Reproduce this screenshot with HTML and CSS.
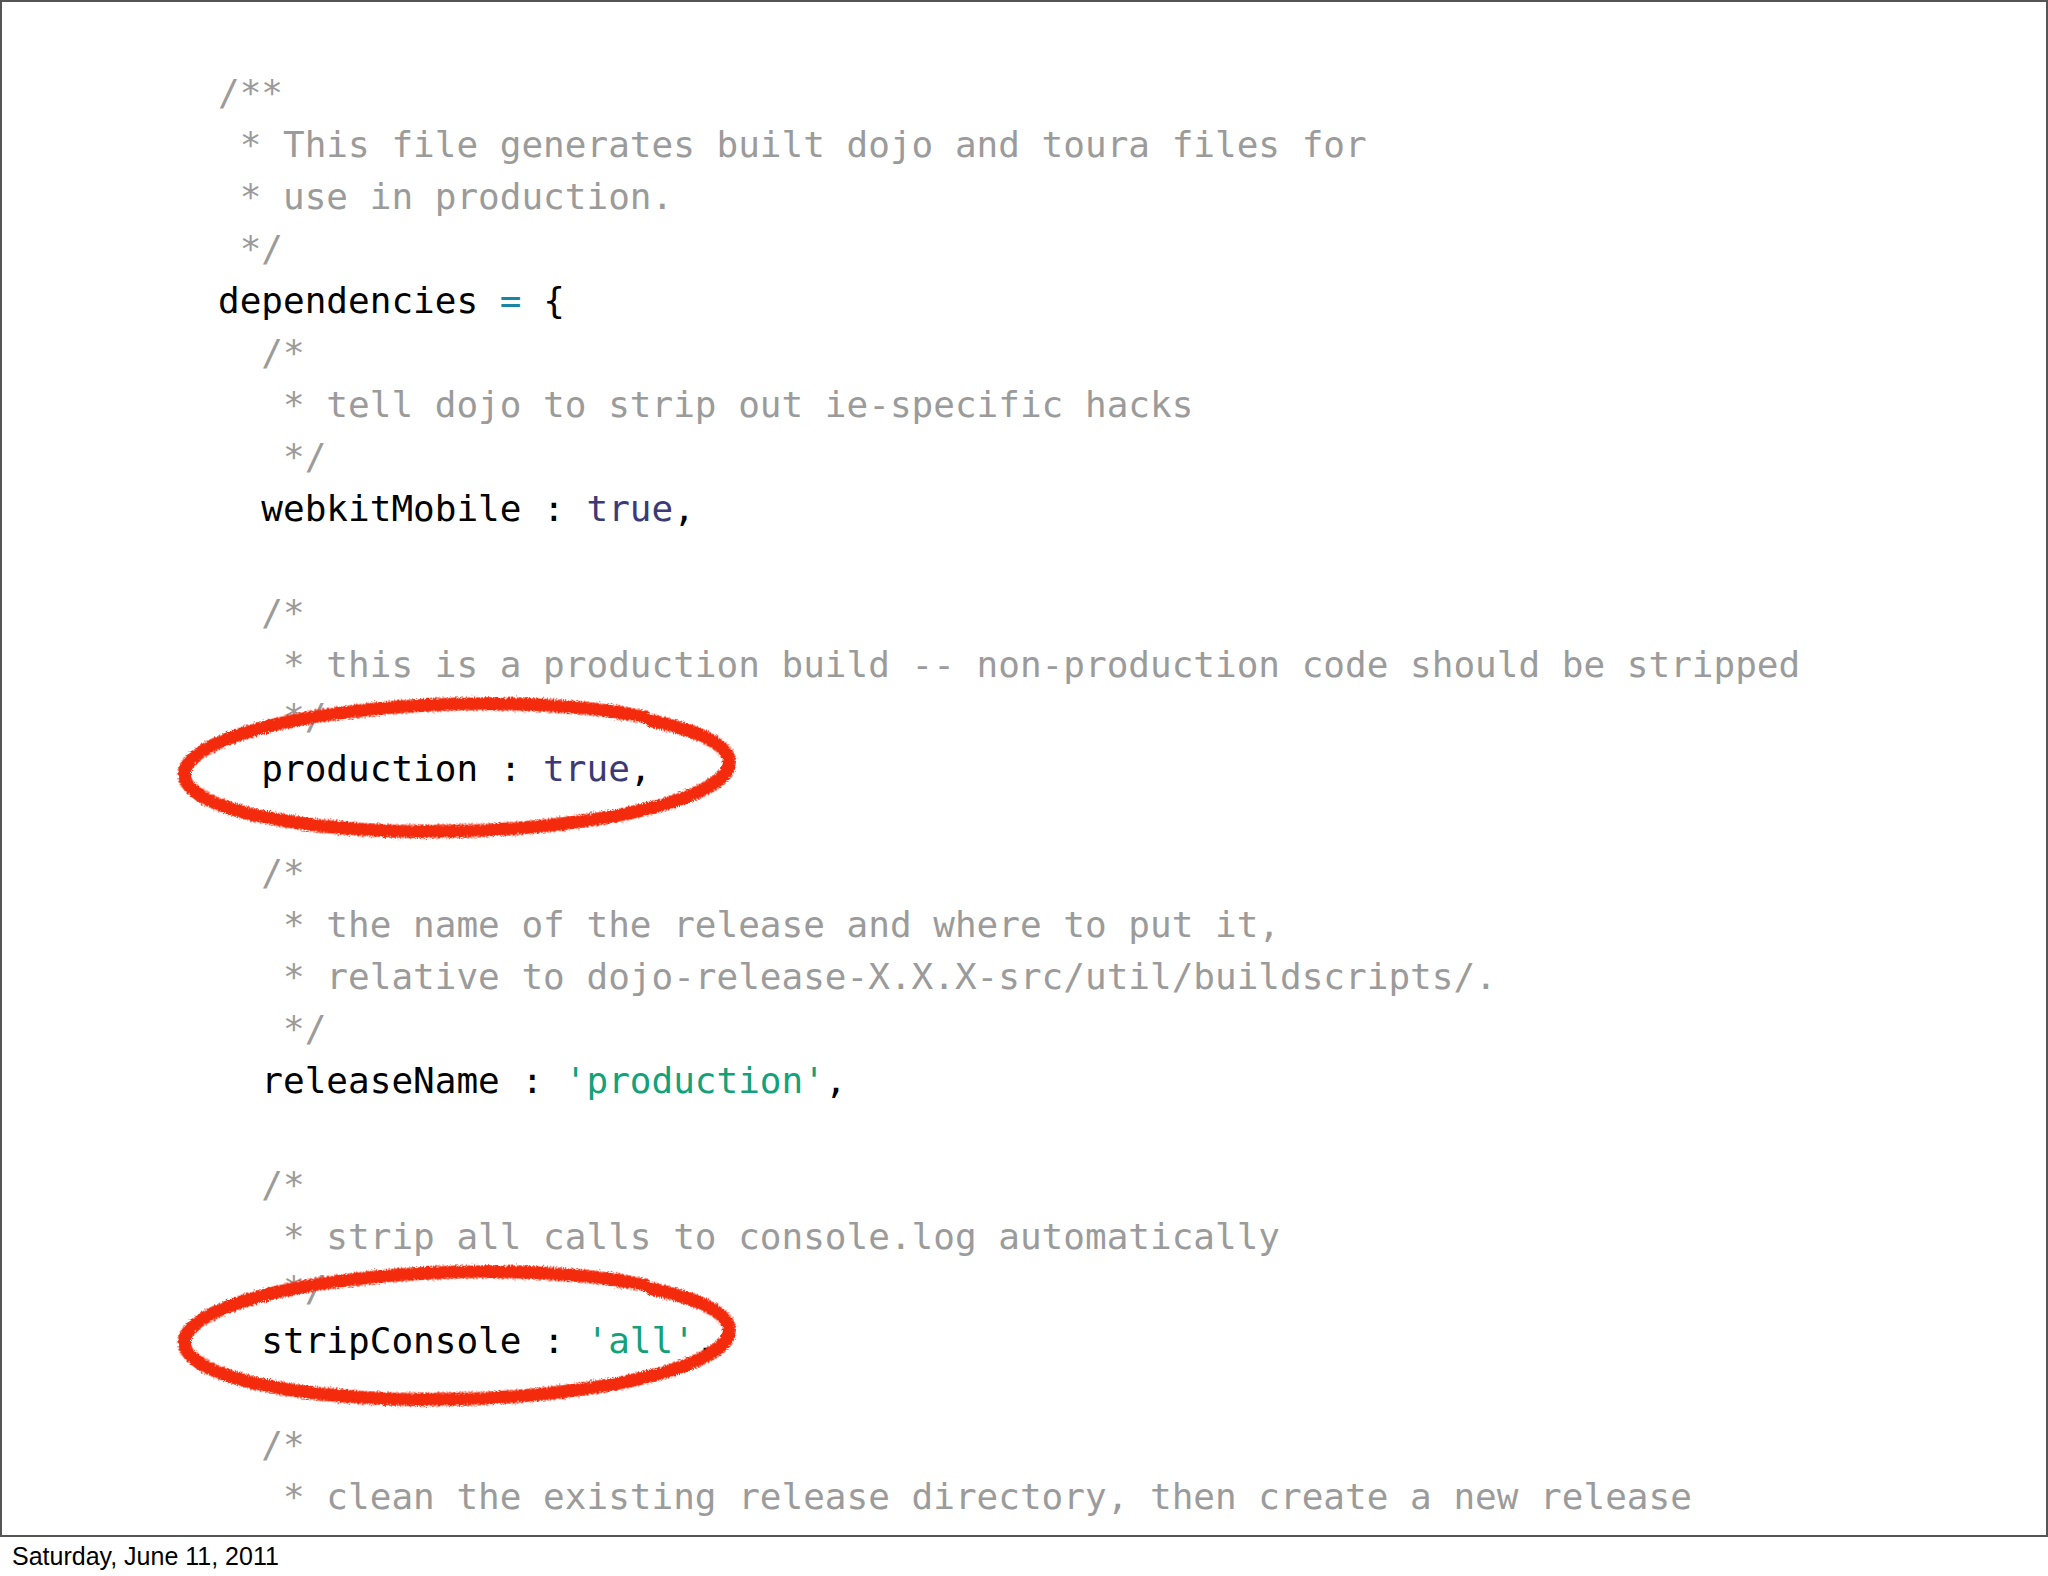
FILE: index.html
```html
<!DOCTYPE html>
<html>
<head>
<meta charset="utf-8">
<link rel="stylesheet" href="styles.css">
</head>
<body>
<div class="slide">
  <div class="code">
    <div class="ln c">/**</div>
    <div class="ln c"> * This file generates built dojo and toura files for</div>
    <div class="ln c"> * use in production.</div>
    <div class="ln c"> */</div>
    <div class="ln">dependencies <span class="op">=</span> {</div>
    <div class="ln c">  /*</div>
    <div class="ln c">   * tell dojo to strip out ie-specific hacks</div>
    <div class="ln c">   */</div>
    <div class="ln">  webkitMobile : <span class="kw">true</span>,</div>
    <div class="ln"> </div>
    <div class="ln c">  /*</div>
    <div class="ln c">   * this is a production build -- non-production code should be stripped</div>
    <div class="ln c">   */</div>
    <div class="ln">  production : <span class="kw">true</span>,</div>
    <div class="ln"> </div>
    <div class="ln c">  /*</div>
    <div class="ln c">   * the name of the release and where to put it,</div>
    <div class="ln c">   * relative to dojo-release-X.X.X-src/util/buildscripts/.</div>
    <div class="ln c">   */</div>
    <div class="ln">  releaseName : <span class="str">'production'</span>,</div>
    <div class="ln"> </div>
    <div class="ln c">  /*</div>
    <div class="ln c">   * strip all calls to console.log automatically</div>
    <div class="ln c">   */</div>
    <div class="ln">  stripConsole : <span class="str">'all'</span>,</div>
    <div class="ln"> </div>
    <div class="ln c">  /*</div>
    <div class="ln c">   * clean the existing release directory, then create a new release</div>
    <div class="ln c">   */</div>
  </div>
  <svg class="marks" width="2048" height="1535" viewBox="0 0 2048 1535" xmlns="http://www.w3.org/2000/svg">
    <defs>
      <filter id="rough" x="-5%" y="-20%" width="110%" height="140%">
        <feTurbulence type="fractalNoise" baseFrequency="0.9" numOctaves="2" seed="3" result="n"/>
        <feDisplacementMap in="SourceGraphic" in2="n" scale="6" xChannelSelector="R" yChannelSelector="G"/>
      </filter>
      <path id="loop" d="M 650.9 723.9 A 271 62 0 0 1 320.5 820.7 A 272.5 63.5 0 1 1 642.9 719.5"/>
    </defs>
    <g class="loop" filter="url(#rough)" transform="rotate(-1.5 456 767)">
      <use href="#loop"/>
    </g>
    <g class="loop" filter="url(#rough)" transform="translate(0 568) rotate(-1.5 456 767)">
      <use href="#loop"/>
    </g>
  </svg>
</div>
<div class="date">Saturday, June 11, 2011</div>
</body>
</html>
```
FILE: styles.css
```css
html, body {
  margin: 0;
  padding: 0;
  background: #ffffff;
}

.slide {
  position: relative;
  box-sizing: border-box;
  width: 2048px;
  height: 1537px;
  border: 2px solid #555555;
  overflow: hidden;
  background: #ffffff;
}

.code {
  display: flex;
  flex-direction: column;
  padding: 65px 0 0 216px;
  font-family: "DejaVu Sans Mono", "Liberation Mono", monospace;
  font-size: 36px;
  line-height: 52px;
  color: #000000;
}

.ln {
  white-space: pre;
  height: 52px;
}

.c {
  color: #9b9b9b;
}

.op {
  color: #1a84a6;
}

.kw {
  color: #3b3a76;
}

.str {
  color: #12a27a;
}

.marks {
  position: absolute;
  left: 0;
  top: 0;
  pointer-events: none;
}

.loop {
  fill: none;
  stroke: #f42a0a;
  stroke-width: 13;
  stroke-linecap: round;
}

.date {
  margin-top: 5px;
  padding-left: 12px;
  font-family: "Liberation Sans", Arial, sans-serif;
  font-size: 25px;
  line-height: 28px;
  color: #000000;
}
```
